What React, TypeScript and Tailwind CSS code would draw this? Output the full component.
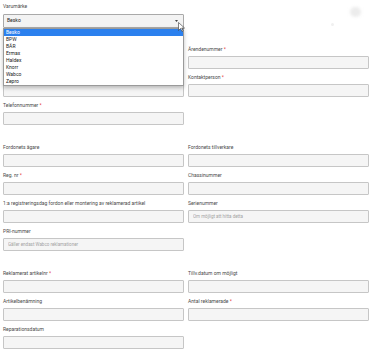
import React from "react";

type FieldProps = {
  label?: string;
  required?: boolean;
  placeholder?: string;
  hidden?: boolean;
};

const FONT = "font-['Roboto','Liberation_Sans',sans-serif]";

function Field({ label, required, placeholder, hidden }: FieldProps) {
  if (!label && !hidden) return <div />;
  return (
    <div className="flex flex-col">
      {/* labels covered by the open dropdown stay empty */}
      <label className="mb-[3px] h-[8px] whitespace-nowrap text-[5px] leading-[8px] text-[#4a4a4a]">
        {hidden ? "" : label}
        {required && !hidden && <span className="text-[#e53935]"> *</span>}
      </label>
      <input
        readOnly
        placeholder={placeholder}
        className="h-[13px] w-full rounded-[1px] border border-[#c6c6c6] bg-[#f5f5f5] px-[4px] text-[4.5px] text-[#555] outline-none placeholder:text-[#a3a3a3]"
      />
    </div>
  );
}

const BRANDS = ["Besko", "BPW", "BÄR", "Ermax", "Haldex", "Knorr", "Wabco", "Zepro"];

function BrandSelect() {
  return (
    <div className="flex flex-col">
      <label className="mb-[4px] h-[8px] text-[5px] leading-[8px] text-[#4a4a4a]">Varumärke</label>
      <div className="relative w-[181px]">
        <div className="flex h-[14px] items-center justify-between rounded-[1px] border border-[#a9a9a9] bg-[#f3f3f3] pl-[3px] pr-[3px] text-[5px] text-[#222]">
          <span>Besko</span>
          <svg width="3" height="2" viewBox="0 0 3 2" className="mr-[2px]">
            <path d="M0 0h3L1.5 2z" fill="#444" />
          </svg>
        </div>
        {/* mouse pointer over the caret */}
        <svg
          width="7"
          height="10"
          viewBox="0 0 7 10"
          className="absolute left-[175px] top-[8px] z-30"
        >
          <path d="M0.5 0.5v8l2-2 1.5 3 1.2-.6-1.5-2.9h2.8z" fill="#fff" stroke="#333" strokeWidth="0.6" />
        </svg>
        <ul className="absolute left-0 right-0 top-full z-20 border border-[#9a9a9a] bg-white shadow-[0_2px_4px_rgba(0,0,0,0.25)]">
          {BRANDS.map((brand, i) => (
            <li
              key={brand}
              className={
                i === 0
                  ? "h-[7px] bg-[#2b80ee] pl-[2px] text-[5px] leading-[7px] text-white"
                  : "h-[7px] pl-[2px] text-[5px] leading-[7px] text-[#222]"
              }
            >
              {brand}
            </li>
          ))}
        </ul>
      </div>
    </div>
  );
}

function Section({ rows, className }: { rows: FieldProps[][]; className?: string }) {
  return (
    <div className={`grid grid-cols-2 gap-x-[4px] gap-y-[4px] ${className ?? ""}`}>
      {rows.flat().map((f, i) => (
        <Field key={i} {...f} />
      ))}
    </div>
  );
}

export default function App() {
  return (
    <div className={`relative h-[355px] w-[372px] overflow-hidden bg-white px-[3px] pt-[2px] ${FONT}`}>
      {/* faint texture in the top right corner */}
      <div className="absolute left-[350px] top-[7px] h-[10px] w-[11px] rounded-full bg-[#ececec] blur-[1.5px]" />
      <div className="absolute left-[331px] top-[23px] h-[3px] w-[3px] rounded-full bg-[#f0f0f0]" />

      <BrandSelect />

      <Section
        className="mt-[17px]"
        rows={[
          [{ hidden: true }, { label: "Ärendenummer", required: true }],
          [{ hidden: true }, { label: "Kontaktperson", required: true }],
          [{ label: "Telefonnummer", required: true }, {}],
        ]}
      />

      <Section
        className="mt-[18px]"
        rows={[
          [{ label: "Fordonets ägare" }, { label: "Fordonets tillverkare" }],
          [{ label: "Reg. nr", required: true }, { label: "Chassinummer" }],
          [
            { label: "1:a registreringsdag fordon eller montering av reklamerad artikel" },
            { label: "Serienummer", placeholder: "Om möjligt att hitta detta" },
          ],
          [{ label: "PRI-nummer", placeholder: "Gäller endast Wabco reklamationer" }, {}],
        ]}
      />

      <Section
        className="mt-[18px]"
        rows={[
          [{ label: "Reklamerat artikelnr", required: true }, { label: "Tillv.datum om möjligt" }],
          [{ label: "Artikelbenämning" }, { label: "Antal reklamerade", required: true }],
          [{ label: "Reparationsdatum" }, {}],
        ]}
      />
    </div>
  );
}
